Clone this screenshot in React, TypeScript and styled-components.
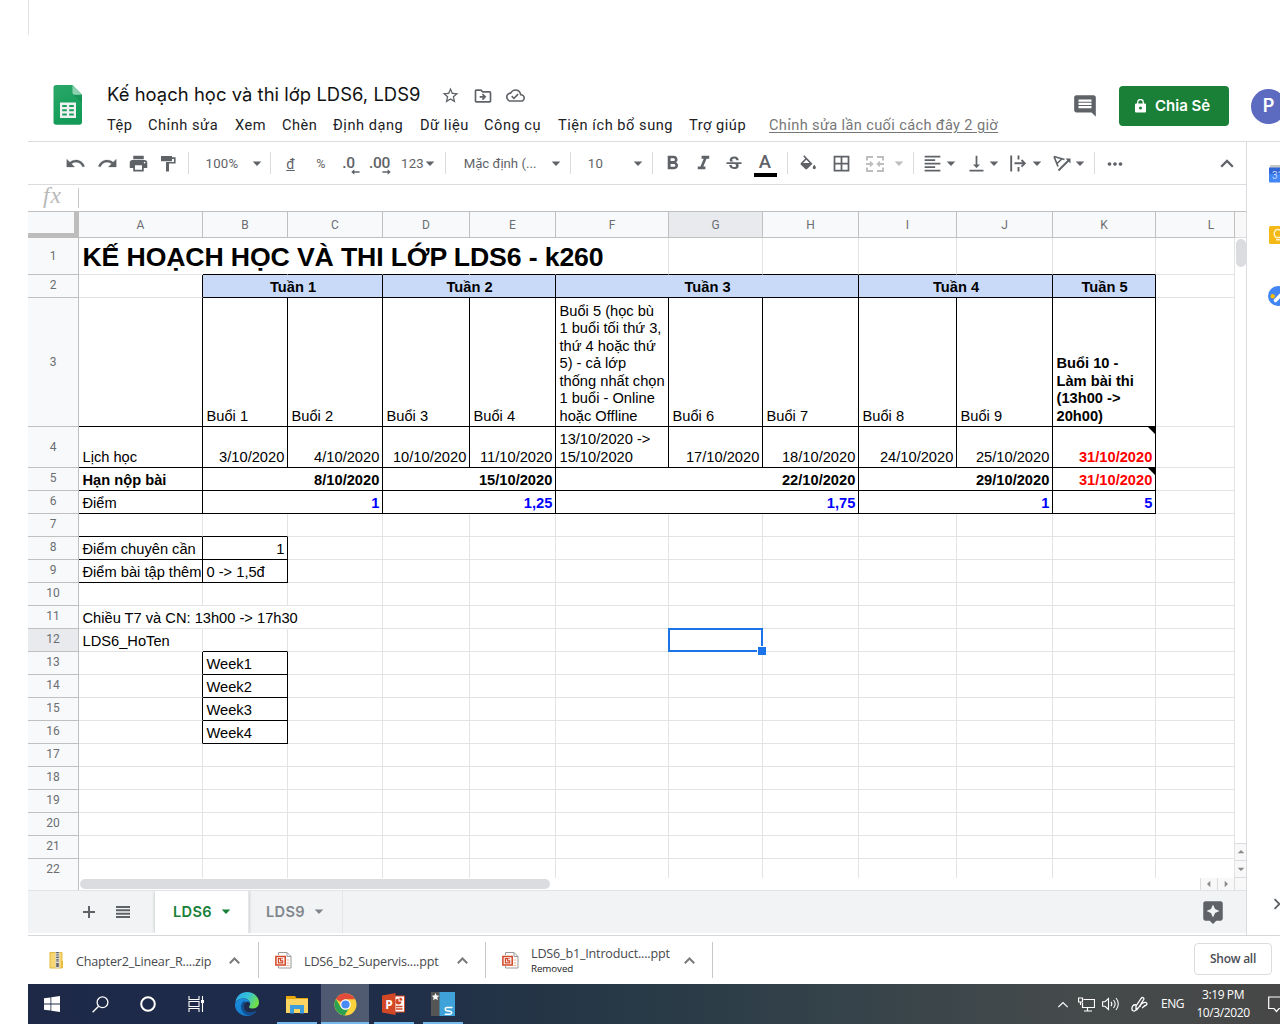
import React from 'react';
import styled, { createGlobalStyle } from 'styled-components';
import {
  MdPrint, MdFormatBold, MdFormatItalic, MdStrikethroughS,
  MdBorderAll, MdFormatAlignLeft, MdVerticalAlignBottom, MdMoreHoriz, MdStarBorder,
  MdOutlineDriveFileMove, MdOutlineCloudDone, MdComment, MdAssistant,
  MdArrowDropDown, MdChevronRight, MdArrowDropUp, MdArrowLeft, MdArrowRight,
} from 'react-icons/md';

const Global = createGlobalStyle`
  * { box-sizing: border-box; }
  body { margin: 0; background: #fff; overflow: hidden; }
  svg { flex: none; display: block; }
`;

const ui = `Roboto, "Liberation Sans", sans-serif`;
const brand = `Inter, Roboto, sans-serif`;
const win = `"Open Sans", "Noto Sans", sans-serif`;

const Screen = styled.div`
  width: 1280px;
  height: 1024px;
  padding-left: 28px;
  display: flex;
  flex-direction: column;
  overflow: hidden;
  background: #fff;
  font-family: ${ui};
`;

const TopStrip = styled.div`
  height: 35px;
  margin-bottom: 35px;
  flex: none;
  border-left: 1px solid #e4e4e4;
`;

const Header = styled.header`
  height: 72px;
  flex: none;
  display: flex;
  border-bottom: 1px solid #dadce0;
`;

const LogoBox = styled.div`
  width: 79px;
  flex: none;
  padding: 15px 0 0 25px;
`;

const Names = styled.div`
  width: 965px;
  flex: none;
  display: flex;
  flex-direction: column;
`;

const TitleRow = styled.div`
  height: 44px;
  padding-top: 6px;
  display: flex;
  align-items: center;
  color: #5f6368;
`;

const DocTitle = styled.div`
  width: 334px;
  margin-top: -2px;
  font: 400 18.4px/24px ${brand};
  letter-spacing: 0.05px;
  color: #111;
  white-space: nowrap;
`;

const TitleIcon = styled.div<{ $w: number }>`
  width: ${(p) => p.$w}px;
  display: flex;
  justify-content: flex-start;
  padding-top: 1px;
`;

const Menu = styled.nav`
  display: flex;
  font-size: 14.6px;
  line-height: 22px;
  letter-spacing: 0.53px;
  color: #202124;
  white-space: nowrap;
`;

const MenuItem = styled.span<{ $w: number }>`
  width: ${(p) => p.$w}px;
  flex: none;
`;

const LastEdit = styled.span`
  color: #777;
  letter-spacing: 0.36px;
  text-decoration: underline;
  text-underline-offset: 2px;
`;

const HeaderActions = styled.div`
  display: flex;
  align-items: center;
  color: #5f6368;
  flex: none;
`;

const ShareButton = styled.div`
  width: 110px;
  height: 40px;
  flex: none;
  margin: 0 22px 0 21px;
  border-radius: 4px;
  background: #1a8038;
  color: #fff;
  display: flex;
  align-items: center;
  padding-left: 16px;
  gap: 9px;
  font: 600 15px/20px ${brand};
  white-space: nowrap;
`;

const Avatar = styled.div`
  width: 35px;
  height: 35px;
  flex: none;
  margin-top: 1px;
  border-radius: 50%;
  background: #5c6bc0;
  color: #fff;
  display: flex;
  align-items: center;
  justify-content: center;
  font: 600 18px/20px ${brand};
`;

const Body = styled.div`
  height: 793px;
  flex: none;
  display: flex;
`;

const Main = styled.main`
  width: 1218px;
  flex: none;
  display: flex;
  flex-direction: column;
`;

const SidePanel = styled.aside`
  flex: 1;
  border-left: 1px solid #dadce0;
  padding: 23px 0 0 20px;
  display: flex;
  flex-direction: column;
  align-items: flex-start;
  overflow: hidden;
`;

const SideItem = styled.div<{ $h: number; $shift?: number }>`
  height: ${(p) => p.$h}px;
  margin-left: ${(p) => p.$shift ?? 2}px;
  color: #5f6368;
`;

const Toolbar = styled.div`
  height: 43px;
  flex: none;
  display: flex;
  align-items: center;
  padding-left: 31px;
  padding-top: 1px;
  border-bottom: 1px solid #dadce0;
  color: #5f6368;
`;

const Slot = styled.div<{ $w: number; $gap?: number; $size?: number; $dim?: boolean; $track?: number }>`
  width: ${(p) => p.$w}px;
  margin-left: ${(p) => p.$gap ?? 0}px;
  height: 30px;
  flex: none;
  display: flex;
  align-items: center;
  justify-content: center;
  white-space: nowrap;
  font-size: ${(p) => p.$size ?? 13.2}px;
  letter-spacing: ${(p) => p.$track ?? 0.25}px;
  color: ${(p) => (p.$dim ? '#bdbec0' : '#5f6368')};
`;

const Divider = styled(Slot)`
  &::before {
    content: '';
    width: 1px;
    height: 22px;
    margin-top: -1px;
    background: #dadce0;
  }
`;

const DecimalText = styled.div`
  display: flex;
  flex-direction: column;
  align-items: flex-end;
  font-size: 15.5px;
  line-height: 15px;
  letter-spacing: -0.3px;
  font-weight: 500;
  padding: 4px 1px 0 0;
  svg { margin: -2px -5px 0 0; }
`;

const WideDecimal = styled(DecimalText)`
  svg { margin-right: -1px; }
`;

const TextColor = styled.div`
  width: 23px;
  height: 26px;
  margin-top: 1px;
  padding-top: 2px;
  border-bottom: 4px solid #000;
  text-align: center;
  font-size: 18.5px;
  line-height: 18px;
  font-weight: 500;
`;

const FormulaBar = styled.div`
  height: 26px;
  flex: none;
  display: flex;
  align-items: center;
`;

const Fx = styled.div`
  width: 51px;
  height: 20px;
  padding-left: 15px;
  border-right: 1px solid #c8c8c8;
  font: italic 23.5px/14px "Liberation Serif", serif;
  letter-spacing: 1px;
  color: #b9b9b9;
`;

const columns = [124, 85, 95, 87, 86, 113, 94, 96, 98, 96, 103, 79];
const rowHeights = [37, 23, 129, 41, ...Array(18).fill(23)];

const SheetArea = styled.div`
  height: 679px;
  flex: none;
  display: flex;
  border-top: 1px solid #c0c0c0;
`;

const GridColumn = styled.div`
  width: 1207px;
  flex: none;
  display: flex;
  flex-direction: column;
`;

const Sheet = styled.div`
  height: 666px;
  flex: none;
  display: grid;
  grid-template-columns: 51px ${columns.map((c) => c + 'px').join(' ')};
  grid-template-rows: 26px ${rowHeights.map((r) => r + 'px').join(' ')};
  overflow: hidden;
`;

const Corner = styled.div`
  background: #f8f9fa;
  border-right: 5px solid #bdbdbd;
  border-bottom: 5px solid #bdbdbd;
`;

const HeadCell = styled.div<{ $active?: boolean; $lift?: number; $push?: boolean }>`
  display: flex;
  align-items: center;
  justify-content: center;
  padding-bottom: ${(p) => p.$lift ?? 0}px;
  padding-left: ${(p) => (p.$push ? 32 : 0)}px;
  background: ${(p) => (p.$active ? '#e8eaed' : '#f8f9fa')};
  border-right: 1px solid #c0c0c0;
  border-bottom: 1px solid #c0c0c0;
  color: #6b6e72;
  font-size: 12px;
  line-height: 14px;
`;

type Line = 'k' | 'g' | 'n';
const lineColor: Record<Line, string> = { k: '#000', g: '#e2e3e3', n: 'transparent' };

const Cell = styled.div<{
  $span: number; $right: Line; $bottom: Line; $align?: string; $bold?: boolean;
  $color?: string; $bg?: string; $title?: boolean; $wrap?: boolean;
}>`
  grid-column: span ${(p) => p.$span};
  min-width: 0;
  min-height: 0;
  position: relative;
  display: flex;
  align-items: flex-end;
  justify-content: ${(p) => p.$align ?? 'flex-start'};
  padding: 0 ${(p) => (p.$align === 'center' ? 2.5 : 2.7)}px ${(p) => (p.$title ? 1 : 0.5)}px 3.5px;
  border-right: 1px solid ${(p) => lineColor[p.$right]};
  border-bottom: 1px solid ${(p) => lineColor[p.$bottom]};
  background: ${(p) => p.$bg ?? 'transparent'};
  color: ${(p) => p.$color ?? '#000'};
  font-family: "Liberation Sans", Arial, sans-serif;
  font-size: ${(p) => (p.$title ? 26.67 : 14.667)}px;
  line-height: ${(p) => (p.$title ? 32 : 17.55)}px;
  letter-spacing: ${(p) => (p.$title ? '-0.14px' : 'normal')};
  font-weight: ${(p) => (p.$bold ? 700 : 400)};
  white-space: ${(p) => (p.$wrap ? 'pre' : 'nowrap')};
`;

const NoteMark = styled.i`
  position: absolute;
  top: 0;
  right: 0;
  border-style: solid;
  border-width: 0 7px 7px 0;
  border-color: transparent #000 transparent transparent;
`;

const Selection = styled.i`
  position: absolute;
  z-index: 1;
  inset: -1px -1px -1px -1px;
  border: 2px solid #1a73e8;
  &::after {
    content: '';
    position: absolute;
    right: -5px;
    bottom: -5px;
    width: 8px;
    height: 8px;
    background: #1a73e8;
    border: 1px solid #fff;
    border-right: 0;
    border-bottom: 0;
  }
`;

const HScroll = styled.div`
  height: 12px;
  display: flex;
`;

const HeadFoot = styled.div`
  width: 51px;
  flex: none;
  background: #f8f9fa;
  border-right: 1px solid #c0c0c0;
`;

const HThumb = styled.div`
  width: 470px;
  height: 10px;
  flex: none;
  margin: 1px 650px 0 1px;
  border-radius: 5px;
  background: #dadce0;
`;

const ScrollButton = styled.div<{ $vertical?: boolean }>`
  width: ${(p) => (p.$vertical ? 11 : 17)}px;
  height: ${(p) => (p.$vertical ? 17 : 12)}px;
  flex: none;
  display: flex;
  align-items: center;
  justify-content: center;
  overflow: hidden;
  background: #f8f8f8;
  color: #8a8a8a;
  border: 0 solid #dadce0;
  border-width: ${(p) => (p.$vertical ? '1px 0 0 0' : '0 0 0 1px')};
`;

const VScroll = styled.div`
  width: 11px;
  display: flex;
  flex-direction: column;
  background: #fff;
`;

const VHead = styled.div`
  height: 26px;
  flex: none;
  background: #f8f8f8;
  border-bottom: 1px solid #dadce0;
`;

const VThumb = styled.div`
  width: 10px;
  height: 28px;
  margin: 1px 0 auto 1px;
  border-radius: 5px;
  background: #dadce0;
`;

const VFoot = styled.div`
  height: 13px;
  background: #f8f8f8;
  border-top: 1px solid #dadce0;
  margin-left: -1px;
  border-left: 1px solid #dadce0;
`;

const TabBar = styled.div`
  height: 44px;
  flex: none;
  display: flex;
  background: #f1f3f4;
  border-top: 1px solid #e1e3e6;
  border-bottom: 1px solid #fff;
  color: #5f6368;
`;

const TabTools = styled.div`
  width: 127px;
  display: flex;
  align-items: center;
  padding: 0 0 1px 55px;
  gap: 21px;
`;

const Tab = styled.div<{ $active?: boolean }>`
  width: 94px;
  display: flex;
  align-items: center;
  padding-left: ${(p) => (p.$active ? 18 : 17)}px;
  gap: 9px;
  font: 600 14.6px/20px ${brand};
  letter-spacing: 0.35px;
  color: ${(p) => (p.$active ? '#188038' : '#80868b')};
  background: ${(p) => (p.$active ? '#fff' : 'transparent')};
  border-right: 1px solid #e4e6e8;
  box-shadow: ${(p) => (p.$active ? '0 0 3px rgba(60,64,67,.3)' : 'none')};
  clip-path: inset(0 -4px 0 -4px);
`;

const Explore = styled.div`
  margin-left: auto;
  padding: 8px 20px 0 0;
`;

const Downloads = styled.div`
  height: 49px;
  flex: none;
  display: flex;
  align-items: center;
  padding-left: 4px;
  border-top: 1px solid #d5d7da;
  font-family: ${win};
`;

const Download = styled.div`
  width: 227px;
  height: 36px;
  flex: none;
  display: flex;
  align-items: center;
  padding-left: 16px;
  border-right: 1px solid #c9c9c9;
  color: #7a7a7a;
`;

const FileText = styled.div`
  width: 153px;
  margin: 2px 0 0 12px;
  font-size: 12.6px;
  line-height: 15px;
  letter-spacing: -0.19px;
  color: #47494d;
  white-space: nowrap;
  small {
    display: block;
    font-size: 9.8px;
    letter-spacing: -0.1px;
    color: #222;
  }
`;

const ShowAll = styled.div`
  width: 78px;
  height: 32px;
  margin: 0 8px 2px auto;
  border: 1px solid #dadce0;
  border-radius: 4px;
  text-align: center;
  font-size: 12px;
  font-weight: 600;
  letter-spacing: -0.25px;
  line-height: 30px;
  color: #4a4d52;
`;

const Taskbar = styled.footer`
  height: 40px;
  flex: none;
  display: flex;
  color: #fff;
  font-family: ${win};
  background: linear-gradient(90deg, #1d2947 0%, #1e2b4a 24%, #243446 40%, #2a3b47 52%, #36434a 66%, #444a4b 82%, #474747 100%);
`;

const TaskItem = styled.div<{ $w: number; $active?: boolean; $open?: boolean }>`
  width: ${(p) => p.$w}px;
  flex: none;
  display: flex;
  align-items: center;
  justify-content: center;
  background:
    linear-gradient(#76b9ed, #76b9ed) center bottom / ${(p) => (p.$active ? '100%' : p.$open ? '40px' : '0')} 2px no-repeat,
    ${(p) => (p.$active ? 'rgba(255,255,255,.22)' : 'transparent')};
`;

const Tray = styled.div`
  width: 224px;
  margin-left: auto;
  display: flex;
  align-items: center;
  flex: none;
`;

const TrayItem = styled.div<{ $w: number }>`
  width: ${(p) => p.$w}px;
  flex: none;
  display: flex;
  justify-content: center;
  text-align: center;
  font-size: 12px;
  line-height: 18px;
  letter-spacing: -0.4px;
  white-space: pre;
`;

const Drop = () => (
  <svg width="10" height="6" viewBox="0 0 10 6"><path d="M.7 .5h8.600L5 5z" fill="currentColor" /></svg>
);

const SheetsLogo = () => (
  <svg width="30" height="40" viewBox="0 0 30 40">
    <defs>
      <linearGradient id="sg" x1="0" y1="0" x2="0.3" y2="1"><stop stopColor="#28a868" /><stop offset="1" stopColor="#149b58" /></linearGradient>
    </defs>
    <path d="M3.2 0H19.5L29 9.5V37a2.8 2.8 0 0 1-2.8 2.8H3.2A2.8 2.8 0 0 1 .5 37V2.8A2.8 2.8 0 0 1 3.2 0z" fill="url(#sg)" />
    <path d="M20.5 10H29v8z" fill="#128a50" opacity=".6" />
    <path d="M19.5 0L29 9.7H22a2.5 2.5 0 0 1-2.5-2.5z" fill="#8ed1b1" />
    <path fillRule="evenodd" fill="#f1f1f1" d="M7 17.5h16v15.5H7zM9.200 20h4.600v2H9.200zM16.200 20h4.600v2h-4.600zM9.200 24.300h4.600v2H9.200zM16.200 24.300h4.600v2h-4.600zM9.200 28.600h4.600v2H9.200zM16.200 28.600h4.600v2h-4.600z" />
  </svg>
);

const LockIcon = () => (
  <svg width="11" height="14" viewBox="0 0 11 14">
    <rect x="0" y="4.5" width="11" height="9" rx="1" fill="#fff" />
    <path d="M2.7 5V3.3a2.8 2.8 0 0 1 5.6 0V5" fill="none" stroke="#fff" strokeWidth="1.3" />
    <circle cx="5.5" cy="9" r="1.5" fill="#1a8038" />
  </svg>
);

const undoPath = 'M12.500 8c-2.650 0-5.050.990-6.900 2.600L2 7v9h9l-3.620-3.620c1.390-1.160 3.160-1.880 5.120-1.880 3.540 0 6.550 2.310 7.600 5.500l2.370-.780C21.080 11.030 17.150 8 12.500 8z';

const UndoIcon = () => (
  <svg width="21" height="21" viewBox="0 0 24 24" fill="currentColor" stroke="currentColor" strokeWidth=".3"><path d={undoPath} /></svg>
);

const RedoIcon = () => (
  <svg width="21" height="21" viewBox="0 0 24 24" fill="currentColor" stroke="currentColor" strokeWidth=".3"><path transform="matrix(-1 0 0 1 24 0)" d={undoPath} /></svg>
);

const CollapseIcon = () => (
  <svg width="14" height="9" viewBox="0 0 14 9" fill="none" stroke="currentColor" strokeWidth="2.300"><path d="M1.200 7.700L7 1.900l5.800 5.800" /></svg>
);

const PaintIcon = () => (
  <svg width="16" height="17" viewBox="0 0 16 17" fill="#5f6368">
    <path d="M0 1h11v5.2H0zM11 2.2h3.6v6.3H8v8H5V6.900h8V4H11z" />
  </svg>
);

const FillIcon = () => (
  <svg width="17" height="17" viewBox="0 0 17 17" fill="#5f6368">
    <path fillRule="evenodd" d="M4.300 .3L3.200 1.400 5.300 3.500.9 7.900a1.300 1.300 0 0 0 0 1.800l4.400 4.400a1.300 1.300 0 0 0 1.800 0l5.400-5.300zM6.300 4.700l3.300 3.300H3z" />
    <path d="M14.300 9.800s-1.600 1.700-1.600 2.800a1.600 1.600 0 0 0 3.200 0c0-1.100-1.600-2.800-1.600-2.800z" />
  </svg>
);

const DecimalArrow = ({ flip }: { flip?: boolean }) => (
  <svg width="9" height="6" viewBox="0 0 10 6">
    <path d={flip ? 'M9.700 3L6.300 0v2.100H.5v1.800h5.800V6z' : 'M.3 3l3.400-3v2.100h5.800v1.800H3.700V6z'} fill="currentColor" />
  </svg>
);

const MergeIcon = () => (
  <svg width="18" height="16" viewBox="0 0 18 16" fill="none" stroke="currentColor" strokeWidth="2">
    <path d="M1 4.5V1h6M11 1h6v3.5M17 11.5V15h-6M7 15H1v-3.5M0 8h6M18 8h-6" />
    <path d="M4 5.5L6.5 8 4 10.500M14 5.500L11.500 8 14 10.500" strokeWidth="1.600" />
  </svg>
);

const WrapIcon = () => (
  <svg width="16" height="17" viewBox="0 0 16 17" fill="none" stroke="currentColor" strokeWidth="1.900">
    <path d="M1.200 0.500v16M8.500 .5v4M8.500 12v4.500M4.500 8.300H14" />
    <path d="M11.500 5L14.800 8.300 11.500 11.600" />
  </svg>
);

const RotateIcon = () => (
  <svg width="18" height="17" viewBox="0 0 18 17" fill="none" stroke="currentColor" strokeWidth="1.700">
    <path d="M1 1.500L11.500 4.500M1 1.500L5 11.500M8.800 4L4 8.500" />
    <path d="M5.500 15.500L15.500 5.500" strokeWidth="2" />
    <path d="M12.500 3.500H17.500V8.500z" fill="currentColor" stroke="none" />
  </svg>
);

const PlusIcon = () => (
  <svg width="12" height="12" viewBox="0 0 12 12" stroke="currentColor" strokeWidth="2"><path d="M6 0v12M0 6h12" /></svg>
);

const ListIcon = () => (
  <svg width="14" height="12" viewBox="0 0 14 12" stroke="currentColor" strokeWidth="2"><path d="M0 1h14M0 4.300h14M0 7.700h14M0 11h14" /></svg>
);

const ZipIcon = () => (
  <svg width="16" height="17" viewBox="0 0 16 17">
    <path d="M2 .5h12v15.500H2z" fill="#f7d774" stroke="#e0b93e" />
    <path d="M13 9h2v7h-2z" fill="#e8bd3c" />
    <path d="M7.500 0h4v16h-4z" fill="#d9d9d9" />
    <path d="M9.500 0v10" stroke="#555" strokeWidth="2.500" strokeDasharray="1.200 1.200" />
    <path d="M8.200 11h2.600v4H8.200z" fill="#666" />
  </svg>
);

const PptFileIcon = () => (
  <svg width="17" height="17" viewBox="0 0 17 17" fill="none">
    <path d="M3.500 3V.5h8.500l4 4v11.500H3.500V14" fill="#fff" stroke="#9a9a9a" />
    <path d="M12 .5v4h4" stroke="#9a9a9a" />
    <path d="M11.500 8h3M11.500 11h3M11.500 13.500h3" stroke="#f0b896" />
    <path d="M.9 4.400h9.300v8.700H.9z" fill="#fff" stroke="#d24726" strokeWidth="1.500" />
    <path d="M5.500 6.700H3.400v4.200h4.300V8.800H5.500zM6.500 6.700h1.200" stroke="#d24726" strokeWidth="1.200" />
  </svg>
);

const CaretUp = ({ w = 11, thin }: { w?: number; thin?: boolean }) => (
  <svg width={w} height="7" viewBox="0 0 11 7" fill="none" stroke="currentColor" strokeWidth={thin ? 1.2 : 2}><path d="M.8 6.200L5.500 1.500 10.200 6.200" /></svg>
);

const WindowsIcon = () => (
  <svg width="16" height="16" viewBox="0 0 16 16" fill="#fff">
    <path d="M0 2.300L6.500 1.400V7.600H0zM7.300 1.300L16 0v7.600H7.300zM0 8.400h6.500v6.200L0 13.700zM7.300 8.400H16V16l-8.700-1.300z" />
  </svg>
);

const SearchIcon = () => (
  <svg width="17" height="17" viewBox="0 0 17 17" fill="none" stroke="#fff" strokeWidth="1.300">
    <circle cx="10.500" cy="6.300" r="5.400" /><path d="M6.600 10.200L.6 16.300" />
  </svg>
);

const TaskViewIcon = () => (
  <svg width="17" height="16" viewBox="0 0 17 16" fill="none" stroke="#fff" strokeWidth="1.100">
    <path d="M1 0v3.500h10V0M1 16v-3.500h10V16M1 5.500h10v5H1zM14.500 0v16" />
    <path d="M13 4h3v3h-3z" fill="#fff" stroke="none" />
  </svg>
);

const EdgeIcon = () => (
  <svg width="24" height="24" viewBox="0 0 24 24">
    <defs>
      <linearGradient id="e1" x1="0" y1="0" x2="1" y2=".4"><stop stopColor="#2aa4e8" /><stop offset=".55" stopColor="#35c1d8" /><stop offset="1" stopColor="#6fe04a" /></linearGradient>
      <linearGradient id="e2" x1="0" y1="0" x2=".6" y2="1"><stop stopColor="#1b8fe0" /><stop offset="1" stopColor="#1479c9" /></linearGradient>
    </defs>
    <path d="M.3 10.500C1.300 4 6 0 12 0c7 0 12 5 12 10.600 0 3.800-3 6-6.200 6-2.400 0-3.900-.8-3.900-1.600 0-.7 1.300-1.200 1.300-3.300C15.200 8.500 12 6.500 8.500 6.500 4.500 6.500 1.500 8.500.3 10.500z" fill="url(#e1)" />
    <path d="M0 12C1 8.600 4.500 6.500 8.500 6.500c3.800 0 6.500 2.500 6.700 5-1-1.500-2.400-1.900-3.600-1.600C9 10.400 8 13 8.500 15.500c.8 3.700 4.500 5.700 8 5.200 2.300-.3 3.900-1.200 5-1.900C19.500 22 16 24 12 24 5.500 24-.5 19 0 12z" fill="url(#e2)" />
    <path d="M8.500 9.300c-2.700 2.200-3.300 6.200-1.500 9.500 1.600 2.900 4.600 4.600 7.800 4.900 3-.7 5.300-2.500 6.700-4.900-1.100.7-2.700 1.600-5 1.900-3.500.5-7.200-1.500-8-5.200-.5-2.500.5-5 3.100-5.600z" fill="#124f92" />
  </svg>
);

const FolderIcon = () => (
  <svg width="22" height="19" viewBox="0 0 22 19">
    <path d="M0 1h9l1.500 2H22v14H0z" fill="#e8a80c" />
    <path d="M0 4h22v14H0z" fill="#fcd462" />
    <path d="M4 10h14v8.500h-4V14H8v4.500H4z" fill="#3f9ddc" />
  </svg>
);

const ChromeIcon = () => (
  <svg width="23" height="23" viewBox="0 0 24 24">
    <circle cx="12" cy="12" r="11.500" fill="#fdd23a" />
    <path d="M2 6.300A11.500 11.500 0 0 1 22 6.500H12L7 9.500z" fill="#e24b3b" />
    <path d="M2 6.300A11.500 11.500 0 0 0 11 23.400l5.300-8.900L12 17.500l-5-3z" fill="#2aa251" />
    <circle cx="12" cy="12" r="5.500" fill="#fff" /><circle cx="12" cy="12" r="4.300" fill="#4a8af4" />
  </svg>
);

const PowerPointIcon = () => (
  <svg width="23" height="22" viewBox="0 0 23 22">
    <path d="M12 3h10.500v16H12z" fill="#fff" stroke="#d24726" />
    <path d="M14 13.500h6.500M14 16h6.500" stroke="#d24726" strokeWidth="1.300" />
    <path d="M16.500 5.500a3 3 0 1 0 3 3h-3z" fill="#d24726" /><path d="M17.500 4.500a3 3 0 0 1 3 3h-3z" fill="#d24726" />
    <path d="M0 2.500L13.500 0v22L0 19.500z" fill="#d24726" />
    <text x="3.200" y="15.500" fontFamily="Open Sans" fontWeight="700" fontSize="12" fill="#fff">P</text>
  </svg>
);

const NotebookIcon = () => (
  <svg width="24" height="24" viewBox="0 0 24 24">
    <path d="M0 0h9v24H0z" fill="#555" /><path d="M8.500 0H24v24H8.500z" fill="#3fa2d9" />
    <path d="M4.500 1l1.100 2.500 2.700.2-2 1.800.6 2.700-2.400-1.400-2.400 1.400.6-2.700-2-1.800 2.700-.2z" fill="#fff" />
    <path d="M21.500 15.500h-5.500c-2.400 0-2.400 3 0 3.300l3 .4c2.400.3 2.400 3-.2 3h-5" fill="none" stroke="#fff" strokeWidth="1.500" />
  </svg>
);

const NetworkIcon = () => (
  <svg width="17" height="15" viewBox="0 0 17 15" fill="none" stroke="#fff" strokeWidth="1.200">
    <path d="M5.500 2.500h11v8h-12V6M9.500 10.500v3M6 14h8M.5 1h4v4h-4zM2.500 5v3" />
  </svg>
);

const VolumeIcon = () => (
  <svg width="18" height="14" viewBox="0 0 18 14" fill="none" stroke="#fff" strokeWidth="1.100">
    <path d="M.6 4.700H3L6.500 1.500v11L3 9.300H.6zM9 4.800c1 1.300 1 3.100 0 4.400M11.500 3c2 2.400 2 5.600 0 8M14 1c3 3.500 3 8.500 0 12" />
  </svg>
);

const PenIcon = () => (
  <svg width="17" height="17" viewBox="0 0 17 17" fill="none" stroke="#fff" strokeWidth="1.300">
    <path d="M5 10L10.500 2c1-1.200 3 0 2.200 1.500L7.500 11.800 5 13zM5.500 9C2.500 8 .5 10.500 1 13.300s4.500 2.200 6.500-1.500M9 11c0-3 3.500-5 6-4.500 1.500.5 1 2.500-.5 3-2 .5-2 2-3.500 2.500" />
  </svg>
);

const NotificationIcon = () => (
  <svg width="18" height="17" viewBox="0 0 18 17" fill="none" stroke="#fff" strokeWidth="1.200">
    <path d="M.7 1h16v11.500H11L8.500 15.500 6 12.500H.7z" />
  </svg>
);

const CalendarIcon = () => (
  <svg width="18" height="18" viewBox="0 0 18 18">
    <path d="M1 0h16v4H1z" fill="#c8c8c8" /><path d="M0 3h18v13.500a1 1 0 0 1-1 1H1a1 1 0 0 1-1-1z" fill="#4285f4" /><path d="M0 2.500h18v6.500H0z" fill="#3367d6" />
    <text x="3" y="13.700" fontFamily="Roboto" fontSize="10" fill="#c5d8fb">31</text>
  </svg>
);

const KeepIcon = () => (
  <svg width="18" height="18" viewBox="0 0 18 18" fill="none" stroke="#fff3cf" strokeWidth="1.400">
    <rect width="18" height="18" rx="1.500" fill="#f5b916" stroke="none" />
    <path d="M7 11.500C3.500 8.500 5.500 3.500 9 3.500s5.500 5 2 8zM7 13.700h4" />
  </svg>
);

const TasksIcon = () => (
  <svg width="20" height="20" viewBox="0 0 20 20">
    <circle cx="10" cy="10" r="10" fill="#4285f4" />
    <path d="M7.500 14.500L16 5.500" fill="none" stroke="#fff" strokeWidth="3.400" strokeLinecap="round" />
    <circle cx="4.700" cy="10.300" r="2.200" fill="#fbbc04" />
  </svg>
);

type CellData = {
  t?: string; s?: number; r?: Line; b?: Line; a?: string; bold?: boolean;
  c?: string; bg?: string; title?: boolean; note?: boolean; sel?: boolean;
};

const repeat = (n: number, cell: CellData = {}): CellData[] => Array.from({ length: n }, () => ({ ...cell }));
const boxed = (t: string, more: CellData = {}): CellData => ({ t, r: 'k', b: 'k', ...more });
const end = { a: 'flex-end' };
const week = (t: string, s: number) => boxed(t, { s, a: 'center', bold: true, bg: '#c9daf8' });
const due = (t: string, s: number) => boxed(t, { s, ...end, bold: true });
const score = (t: string, s: number) => boxed(t, { s, ...end, bold: true, c: '#0000ff' });

const rows: CellData[][] = [
  [{ t: 'KẾ HOẠCH HỌC VÀ THI LỚP LDS6 - k260', title: true, bold: true, r: 'n' }, ...repeat(4, { r: 'n', b: 'k' }), ...repeat(6, { b: 'k' }), {}],
  [{ r: 'k' }, week('Tuần 1', 2), week('Tuần 2', 2), week('Tuần 3', 3), week('Tuần 4', 2), week('Tuần 5', 1), {}],
  [
    { r: 'k', b: 'k' }, boxed('Buổi 1'), boxed('Buổi 2'), boxed('Buổi 3'), boxed('Buổi 4'),
    boxed('Buổi 5 (học bù\n1 buổi tối thứ 3,\nthứ 4 hoặc thứ\n5) - cả lớp\nthống nhất chọn\n1 buổi - Online\nhoặc Offline'),
    boxed('Buổi 6'), boxed('Buổi 7'), boxed('Buổi 8'), boxed('Buổi 9'),
    boxed('Buổi 10 -\nLàm bài thi\n(13h00 ->\n20h00)', { bold: true }), {},
  ],
  [
    boxed('Lịch học'), boxed('3/10/2020', end), boxed('4/10/2020', end), boxed('10/10/2020', end), boxed('11/10/2020', end),
    boxed('13/10/2020 ->\n15/10/2020'), boxed('17/10/2020', end), boxed('18/10/2020', end), boxed('24/10/2020', end),
    boxed('25/10/2020', end), boxed('31/10/2020', { ...end, bold: true, c: '#ff0000', note: true }), {},
  ],
  [
    boxed('Hạn nộp bài', { bold: true }), due('8/10/2020', 2), due('15/10/2020', 2), due('22/10/2020', 3), due('29/10/2020', 2),
    boxed('31/10/2020', { ...end, bold: true, c: '#ff0000', note: true }), {},
  ],
  [boxed('Điểm'), score('1', 2), score('1,25', 2), score('1,75', 3), score('1', 2), score('5', 1), {}],
  [{ b: 'k' }, { b: 'k' }, ...repeat(10)],
  [boxed('Điểm chuyên cần'), boxed('1', end), ...repeat(10)],
  [boxed('Điểm bài tập thêm'), boxed('0 -> 1,5đ'), ...repeat(10)],
  repeat(12),
  [{ t: 'Chiều T7 và CN: 13h00 -> 17h30', r: 'n' }, { r: 'n' }, ...repeat(10)],
  [{ t: 'LDS6_HoTen' }, { b: 'k' }, ...repeat(4), { sel: true }, ...repeat(5)],
  ...['Week1', 'Week2', 'Week3', 'Week4'].map((w) => [{ r: 'k' as Line }, boxed(w), ...repeat(10)]),
  ...Array.from({ length: 6 }, () => repeat(12)),
];

const menuItems: [string, number][] = [
  ['Tệp', 41], ['Chỉnh sửa', 87], ['Xem', 47], ['Chèn', 51], ['Định dạng', 87],
  ['Dữ liệu', 64], ['Công cụ', 74], ['Tiện ích bổ sung', 131], ['Trợ giúp', 80],
];

const downloads = [
  { name: 'Chapter2_Linear_R....zip', zip: true },
  { name: 'LDS6_b2_Supervis....ppt' },
  { name: 'LDS6_b1_Introduct....ppt', status: 'Removed' },
];

export default function App() {
  return (
    <Screen>
      <Global />
      <TopStrip />
      <Header>
        <LogoBox><SheetsLogo /></LogoBox>
        <Names>
          <TitleRow>
            <DocTitle>Kế hoạch học và thi lớp LDS6, LDS9</DocTitle>
            <TitleIcon $w={32}><MdStarBorder size={19} /></TitleIcon>
            <TitleIcon $w={33}><MdOutlineDriveFileMove size={20} /></TitleIcon>
            <TitleIcon $w={30}><MdOutlineCloudDone size={19} /></TitleIcon>
          </TitleRow>
          <Menu>
            {menuItems.map(([label, w]) => <MenuItem key={label} $w={w}>{label}</MenuItem>)}
            <LastEdit>Chỉnh sửa lần cuối cách đây 2 giờ</LastEdit>
          </Menu>
        </Names>
        <HeaderActions>
          <MdComment size={26} />
          <ShareButton><LockIcon />Chia Sẻ</ShareButton>
          <Avatar>P</Avatar>
        </HeaderActions>
      </Header>

      <Body>
        <Main>
          <Toolbar>
            <Slot $w={32}><UndoIcon /></Slot>
            <Slot $w={32}><RedoIcon /></Slot>
            <Slot $w={30}><MdPrint size={21} /></Slot>
            <Slot $w={32}><PaintIcon /></Slot>
            <Divider $w={6} />
            <Slot $w={62}>100%</Slot>
            <Slot $w={7}><Drop /></Slot>
            <Divider $w={21} />
            <Slot $w={19} $size={14}><u>đ</u></Slot>
            <Slot $w={42} $size={12.5}>%</Slot>
            <Slot $w={14}><DecimalText>.0<DecimalArrow /></DecimalText></Slot>
            <Slot $w={48}><WideDecimal>.00<DecimalArrow flip /></WideDecimal></Slot>
            <Slot $w={17}>123</Slot>
            <Slot $w={18}><Drop /></Slot>
            <Divider $w={13} />
            <Slot $w={96} $track={0}>Mặc định (...</Slot>
            <Slot $w={16}><Drop /></Slot>
            <Divider $w={13} />
            <Slot $w={37}>10</Slot>
            <Slot $w={16} $gap={16}><Drop /></Slot>
            <Divider $w={13} />
            <Slot $w={26}><MdFormatBold size={23} /></Slot>
            <Slot $w={32} $gap={2}><MdFormatItalic size={23} /></Slot>
            <Slot $w={30}><MdStrikethroughS size={20} /></Slot>
            <Slot $w={32}><TextColor>A</TextColor></Slot>
            <Divider $w={13} />
            <Slot $w={28}><FillIcon /></Slot>
            <Slot $w={32} $gap={3}><MdBorderAll size={21} /></Slot>
            <Slot $w={30} $gap={3} $dim><MergeIcon /></Slot>
            <Slot $w={18} $dim><Drop /></Slot>
            <Divider $w={11} />
            <Slot $w={26}><MdFormatAlignLeft size={21} /></Slot>
            <Slot $w={12}><Drop /></Slot>
            <Slot $w={32} $gap={3}><MdVerticalAlignBottom size={21} /></Slot>
            <Slot $w={4}><Drop /></Slot>
            <Slot $w={32} $gap={6}><WrapIcon /></Slot>
            <Slot $w={6}><Drop /></Slot>
            <Slot $w={32} $gap={6}><RotateIcon /></Slot>
            <Slot $w={4}><Drop /></Slot>
            <Divider $w={13} $gap={6} />
            <Slot $w={28}><MdMoreHoriz size={22} /></Slot>
            <Slot $w={32} $gap={82}><CollapseIcon /></Slot>
          </Toolbar>
          <FormulaBar><Fx>fx</Fx></FormulaBar>
          <SheetArea>
            <GridColumn>
              <Sheet>
                <Corner />
                {'ABCDEFGHIJKL'.split('').map((c) => (
                  <HeadCell key={c} $active={c === 'G'} $push={c === 'L'}>{c}</HeadCell>
                ))}
                {rows.map((row, i) => (
                  <React.Fragment key={i}>
                    <HeadCell $lift={rowHeights[i] > 23 ? 1 : 3} $active={i === 11}>{i + 1}</HeadCell>
                    {row.map((cell, j) => (
                      <Cell
                        key={j} $span={cell.s ?? 1} $right={cell.r ?? 'g'} $bottom={cell.b ?? 'g'}
                        $align={cell.a} $bold={cell.bold} $color={cell.c} $bg={cell.bg}
                        $title={cell.title} $wrap={cell.t?.includes('\n')}
                      >
                        {cell.t}
                        {cell.note && <NoteMark />}
                        {cell.sel && <Selection />}
                      </Cell>
                    ))}
                  </React.Fragment>
                ))}
              </Sheet>
              <HScroll>
                <HeadFoot />
                <HThumb />
                <ScrollButton><MdArrowLeft size={16} /></ScrollButton>
                <ScrollButton><MdArrowRight size={16} /></ScrollButton>
              </HScroll>
            </GridColumn>
            <VScroll>
              <VHead />
              <VThumb />
              <ScrollButton $vertical><MdArrowDropUp size={16} /></ScrollButton>
              <ScrollButton $vertical><MdArrowDropDown size={16} /></ScrollButton>
              <VFoot />
            </VScroll>
          </SheetArea>
          <TabBar>
            <TabTools><PlusIcon /><ListIcon /></TabTools>
            <Tab $active>LDS6 <Drop /></Tab>
            <Tab>LDS9 <Drop /></Tab>
            <Explore><MdAssistant size={26} /></Explore>
          </TabBar>
        </Main>
        <SidePanel>
          <SideItem $h={61}><CalendarIcon /></SideItem>
          <SideItem $h={60}><KeepIcon /></SideItem>
          <SideItem $h={607} $shift={1}><TasksIcon /></SideItem>
          <SideItem $h={22} $shift={-1}><MdChevronRight size={22} /></SideItem>
        </SidePanel>
      </Body>

      <Downloads>
        {downloads.map((d) => (
          <Download key={d.name}>
            {d.zip ? <ZipIcon /> : <PptFileIcon />}
            <FileText>{d.name}{d.status && <small>{d.status}</small>}</FileText>
            <CaretUp />
          </Download>
        ))}
        <ShowAll>Show all</ShowAll>
      </Downloads>

      <Taskbar>
        <TaskItem $w={48}><WindowsIcon /></TaskItem>
        <TaskItem $w={48}><SearchIcon /></TaskItem>
        <TaskItem $w={48}>
          <svg width="16" height="16" viewBox="0 0 16 16"><circle cx="8" cy="8" r="6.800" fill="none" stroke="#fff" strokeWidth="2" /></svg>
        </TaskItem>
        <TaskItem $w={48}><TaskViewIcon /></TaskItem>
        <TaskItem $w={53}><EdgeIcon /></TaskItem>
        <TaskItem $w={48} $open><FolderIcon /></TaskItem>
        <TaskItem $w={48} $active><ChromeIcon /></TaskItem>
        <TaskItem $w={49} $open><PowerPointIcon /></TaskItem>
        <TaskItem $w={49} $open><NotebookIcon /></TaskItem>
        <Tray>
          <TrayItem $w={14}><CaretUp w={12} thin /></TrayItem>
          <TrayItem $w={33}><NetworkIcon /></TrayItem>
          <TrayItem $w={15}><VolumeIcon /></TrayItem>
          <TrayItem $w={42}><PenIcon /></TrayItem>
          <TrayItem $w={25}>ENG</TrayItem>
          <TrayItem $w={76}>{'3:19 PM\n10/3/2020'}</TrayItem>
          <TrayItem $w={32}><NotificationIcon /></TrayItem>
        </Tray>
      </Taskbar>
    </Screen>
  );
}
